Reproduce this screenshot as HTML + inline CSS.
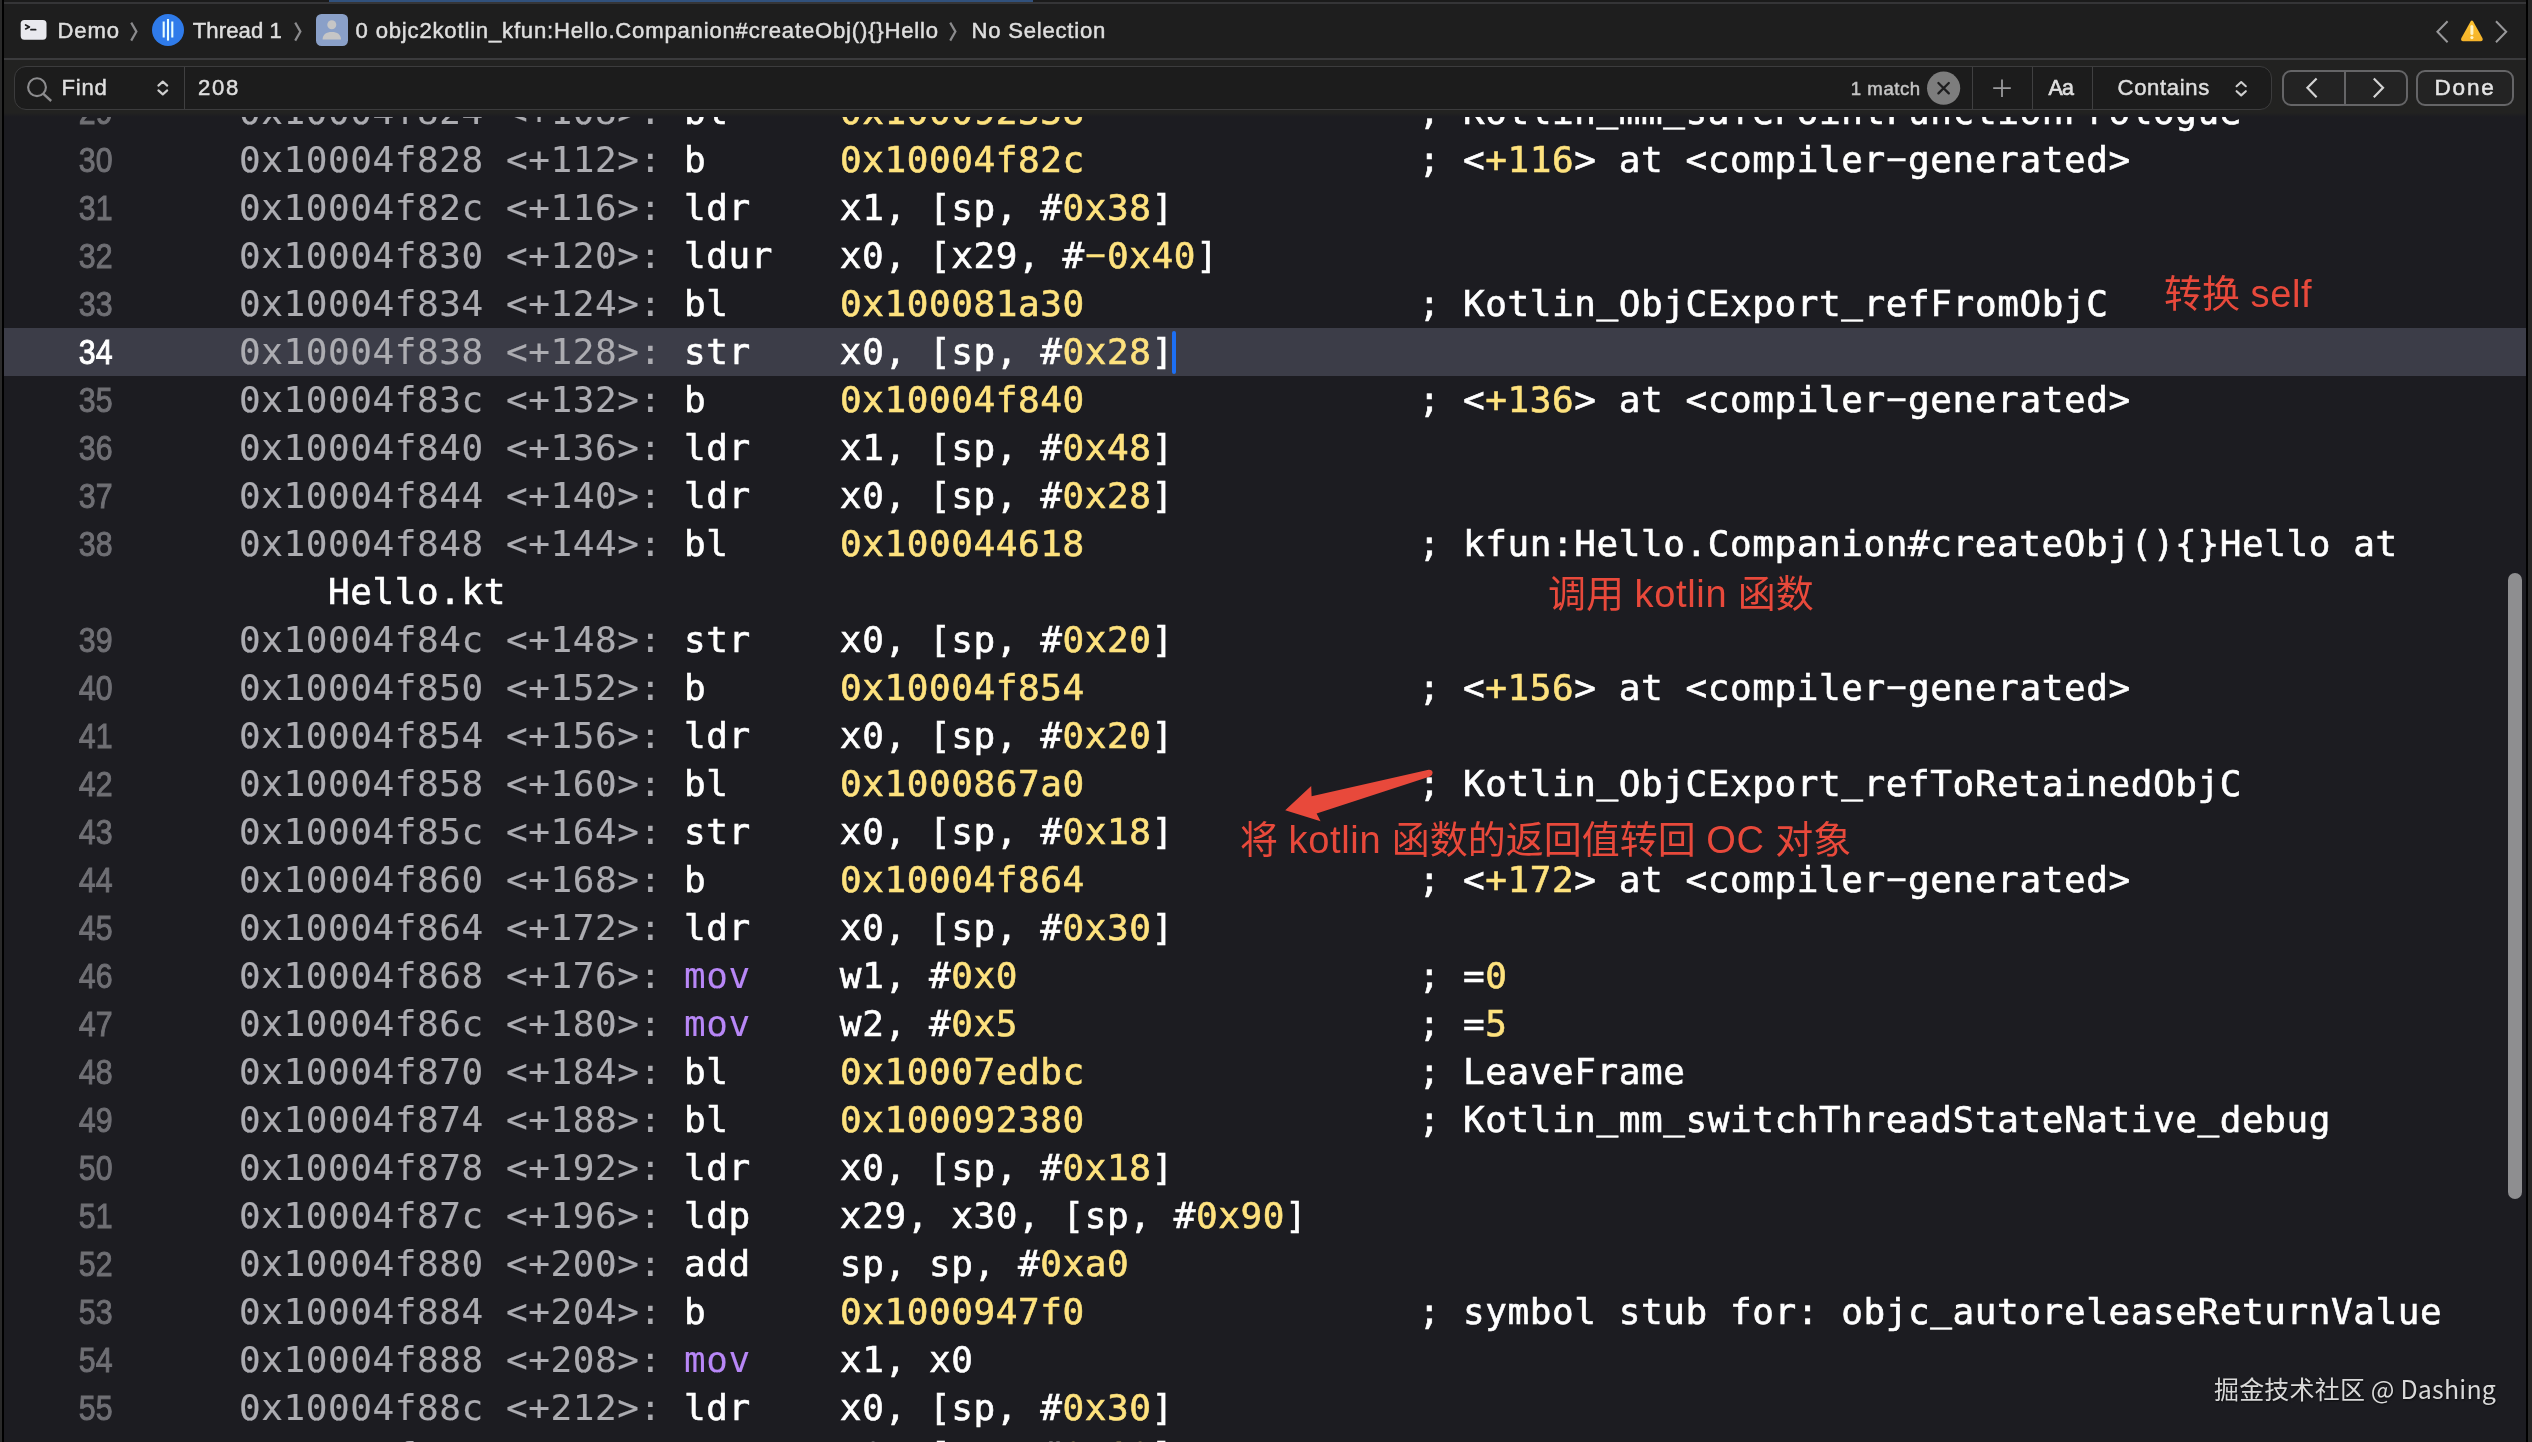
<!DOCTYPE html>
<html lang="zh">
<head>
<meta charset="utf-8">
<title>Demo — Thread 1 — objc2kotlin_kfun:Hello.Companion#createObj(){}Hello</title>
<style>
html,body{margin:0;padding:0;background:#1c1c21;}
body{width:2532px;height:1442px;overflow:hidden;position:relative;font-family:"Liberation Sans","Noto Sans CJK SC",sans-serif;}
#app{position:absolute;left:0;top:0;width:2532px;height:1442px;overflow:hidden;background:#1c1c21;}
#chrome{position:absolute;left:0;top:0;width:2532px;height:116px;will-change:transform;}
/* code area */
#code{position:absolute;left:4px;top:112px;width:2522px;height:1330px;overflow:hidden;background:#1c1c21;}
#codein{position:absolute;left:-4px;top:-112px;width:2532px;height:1442px;will-change:transform;}
.r{position:absolute;left:239px;height:48px;line-height:48px;white-space:pre;color:#fff;
   font-family:"DejaVu Sans Mono","Liberation Mono",monospace;font-size:36px;letter-spacing:0.58px;-webkit-text-stroke:0.6px currentColor;}
.r .u{position:relative;top:-3px;}
.r .h{display:inline-block;transform:translateY(-1.6px) scale(1.85,0.82);}
.r .a{color:#acacb1;-webkit-text-stroke:0.15px currentColor;}
.r .n{color:#fee27e;}
.r .k{color:#b887f7;-webkit-text-stroke:0.1px currentColor;}
.r .w{color:#fff;}
.ln{position:absolute;left:20px;width:92.5px;height:48px;line-height:48px;text-align:right;color:#6f6f74;
   font-family:"Liberation Sans",sans-serif;font-size:34.6px;-webkit-text-stroke:1px currentColor;transform:scaleX(.875);transform-origin:100% 50%;}
.ln.cur{color:#fff;}
.hl{position:absolute;left:4px;width:2522px;height:48px;background:#3c3d48;}
/* chrome */
#edgeL0{position:absolute;left:0;top:0;width:2px;height:1442px;background:#2a2a2a;}
#edgeL1{position:absolute;left:2px;top:0;width:2px;height:1442px;background:#000;}
#edgeR1{position:absolute;left:2526px;top:0;width:2px;height:1442px;background:#000;}
#edgeR0{position:absolute;left:2528px;top:0;width:4px;height:1442px;background:#272727;}
#topstrip{position:absolute;left:4px;top:0;width:2522px;height:2px;background:#1b1b1b;}
#topblue{position:absolute;left:329px;top:0;width:704px;height:2px;background:#31517c;}
#topline{position:absolute;left:4px;top:2px;width:2522px;height:2px;background:#353537;}
#jump{position:absolute;left:4px;top:4px;width:2522px;height:54px;background:#1e1e1e;}
#jumpline{position:absolute;left:4px;top:58px;width:2522px;height:2px;background:#3b3b3d;}
#findbar{position:absolute;left:4px;top:60px;width:2522px;height:57px;background:linear-gradient(#222221 0,#222221 53px,#1c1c21 57px);}
.t{position:absolute;white-space:pre;color:#dedede;-webkit-text-stroke:0.5px currentColor;font-size:22.1px;line-height:30px;height:30px;margin-top:0.5px;}
.chev{position:absolute;}
#field{position:absolute;left:14px;top:66px;width:2256px;height:42px;border:1.2px solid #3c3c3d;border-radius:12px;background:#1c1c1c;}
.vd{position:absolute;top:67px;width:1px;height:42px;background:#404041;}
.btn{position:absolute;top:70px;height:32px;border:2px solid #656567;border-radius:9px;background:#232323;}
/* annotations */
.red .la{letter-spacing:0.65px;}
.red{position:absolute;white-space:pre;color:#e8493b;font-family:"Liberation Sans","Noto Sans CJK SC",sans-serif;font-size:38px;line-height:48px;height:48px;}
#wm{position:absolute;left:2214px;top:1367.5px;letter-spacing:0.18px;white-space:pre;color:#d9d9d9;font-family:"Noto Sans CJK SC","Liberation Sans",sans-serif;font-size:25px;line-height:40px;text-shadow:1px 1px 2px rgba(0,0,0,.6);}
#thumb{position:absolute;left:2508px;top:573px;width:14px;height:626px;border-radius:7px;background:#8e8e90;}
#caret{position:absolute;left:1172px;top:330.5px;width:4px;height:43.5px;border-radius:2px;background:#1d6ff3;}
</style>
</head>
<body>
<div id="app">
 <div id="code"><div id="codein">
<div class="ln" style="top:88px">29</div>
<div class="r" style="top:88px"><span class="a">0x10004f824 &lt;+108&gt;:</span> <span class="w">bl</span>     <span class="n">0x100092338</span>               ; Kotlin<span class="u">_</span>mm<span class="u">_</span>safePointFunctionPrologue</div>
<div class="ln" style="top:136px">30</div>
<div class="r" style="top:136px"><span class="a">0x10004f828 &lt;+112&gt;:</span> <span class="w">b</span>      <span class="n">0x10004f82c</span>               ; &lt;<span class="n">+116</span>&gt; at &lt;compiler<span class="h">-</span>generated&gt;</div>
<div class="ln" style="top:184px">31</div>
<div class="r" style="top:184px"><span class="a">0x10004f82c &lt;+116&gt;:</span> <span class="w">ldr</span>    x1, [sp, #<span class="n">0x38</span>]</div>
<div class="ln" style="top:232px">32</div>
<div class="r" style="top:232px"><span class="a">0x10004f830 &lt;+120&gt;:</span> <span class="w">ldur</span>   x0, [x29, #<span class="n"><span class="h">-</span>0x40</span>]</div>
<div class="ln" style="top:280px">33</div>
<div class="r" style="top:280px"><span class="a">0x10004f834 &lt;+124&gt;:</span> <span class="w">bl</span>     <span class="n">0x100081a30</span>               ; Kotlin<span class="u">_</span>ObjCExport<span class="u">_</span>refFromObjC</div>
<div class="hl" style="top:328px"></div>
<div class="ln cur" style="top:328px">34</div>
<div class="r" style="top:328px"><span class="a">0x10004f838 &lt;+128&gt;:</span> <span class="w">str</span>    x0, [sp, #<span class="n">0x28</span>]</div>
<div class="ln" style="top:376px">35</div>
<div class="r" style="top:376px"><span class="a">0x10004f83c &lt;+132&gt;:</span> <span class="w">b</span>      <span class="n">0x10004f840</span>               ; &lt;<span class="n">+136</span>&gt; at &lt;compiler<span class="h">-</span>generated&gt;</div>
<div class="ln" style="top:424px">36</div>
<div class="r" style="top:424px"><span class="a">0x10004f840 &lt;+136&gt;:</span> <span class="w">ldr</span>    x1, [sp, #<span class="n">0x48</span>]</div>
<div class="ln" style="top:472px">37</div>
<div class="r" style="top:472px"><span class="a">0x10004f844 &lt;+140&gt;:</span> <span class="w">ldr</span>    x0, [sp, #<span class="n">0x28</span>]</div>
<div class="ln" style="top:520px">38</div>
<div class="r" style="top:520px"><span class="a">0x10004f848 &lt;+144&gt;:</span> <span class="w">bl</span>     <span class="n">0x100044618</span>               ; kfun:Hello.Companion#createObj(){}Hello at</div>
<div class="r" style="top:568px">    Hello.kt</div>
<div class="ln" style="top:616px">39</div>
<div class="r" style="top:616px"><span class="a">0x10004f84c &lt;+148&gt;:</span> <span class="w">str</span>    x0, [sp, #<span class="n">0x20</span>]</div>
<div class="ln" style="top:664px">40</div>
<div class="r" style="top:664px"><span class="a">0x10004f850 &lt;+152&gt;:</span> <span class="w">b</span>      <span class="n">0x10004f854</span>               ; &lt;<span class="n">+156</span>&gt; at &lt;compiler<span class="h">-</span>generated&gt;</div>
<div class="ln" style="top:712px">41</div>
<div class="r" style="top:712px"><span class="a">0x10004f854 &lt;+156&gt;:</span> <span class="w">ldr</span>    x0, [sp, #<span class="n">0x20</span>]</div>
<div class="ln" style="top:760px">42</div>
<div class="r" style="top:760px"><span class="a">0x10004f858 &lt;+160&gt;:</span> <span class="w">bl</span>     <span class="n">0x1000867a0</span>               ; Kotlin<span class="u">_</span>ObjCExport<span class="u">_</span>refToRetainedObjC</div>
<div class="ln" style="top:808px">43</div>
<div class="r" style="top:808px"><span class="a">0x10004f85c &lt;+164&gt;:</span> <span class="w">str</span>    x0, [sp, #<span class="n">0x18</span>]</div>
<div class="ln" style="top:856px">44</div>
<div class="r" style="top:856px"><span class="a">0x10004f860 &lt;+168&gt;:</span> <span class="w">b</span>      <span class="n">0x10004f864</span>               ; &lt;<span class="n">+172</span>&gt; at &lt;compiler<span class="h">-</span>generated&gt;</div>
<div class="ln" style="top:904px">45</div>
<div class="r" style="top:904px"><span class="a">0x10004f864 &lt;+172&gt;:</span> <span class="w">ldr</span>    x0, [sp, #<span class="n">0x30</span>]</div>
<div class="ln" style="top:952px">46</div>
<div class="r" style="top:952px"><span class="a">0x10004f868 &lt;+176&gt;:</span> <span class="k">mov</span>    w1, #<span class="n">0x0</span>                  ; =<span class="n">0</span></div>
<div class="ln" style="top:1000px">47</div>
<div class="r" style="top:1000px"><span class="a">0x10004f86c &lt;+180&gt;:</span> <span class="k">mov</span>    w2, #<span class="n">0x5</span>                  ; =<span class="n">5</span></div>
<div class="ln" style="top:1048px">48</div>
<div class="r" style="top:1048px"><span class="a">0x10004f870 &lt;+184&gt;:</span> <span class="w">bl</span>     <span class="n">0x10007edbc</span>               ; LeaveFrame</div>
<div class="ln" style="top:1096px">49</div>
<div class="r" style="top:1096px"><span class="a">0x10004f874 &lt;+188&gt;:</span> <span class="w">bl</span>     <span class="n">0x100092380</span>               ; Kotlin<span class="u">_</span>mm<span class="u">_</span>switchThreadStateNative<span class="u">_</span>debug</div>
<div class="ln" style="top:1144px">50</div>
<div class="r" style="top:1144px"><span class="a">0x10004f878 &lt;+192&gt;:</span> <span class="w">ldr</span>    x0, [sp, #<span class="n">0x18</span>]</div>
<div class="ln" style="top:1192px">51</div>
<div class="r" style="top:1192px"><span class="a">0x10004f87c &lt;+196&gt;:</span> <span class="w">ldp</span>    x29, x30, [sp, #<span class="n">0x90</span>]</div>
<div class="ln" style="top:1240px">52</div>
<div class="r" style="top:1240px"><span class="a">0x10004f880 &lt;+200&gt;:</span> <span class="w">add</span>    sp, sp, #<span class="n">0xa0</span></div>
<div class="ln" style="top:1288px">53</div>
<div class="r" style="top:1288px"><span class="a">0x10004f884 &lt;+204&gt;:</span> <span class="w">b</span>      <span class="n">0x1000947f0</span>               ; symbol stub for: objc<span class="u">_</span>autoreleaseReturnValue</div>
<div class="ln" style="top:1336px">54</div>
<div class="r" style="top:1336px"><span class="a">0x10004f888 &lt;+208&gt;:</span> <span class="k">mov</span>    x1, x0</div>
<div class="ln" style="top:1384px">55</div>
<div class="r" style="top:1384px"><span class="a">0x10004f88c &lt;+212&gt;:</span> <span class="w">ldr</span>    x0, [sp, #<span class="n">0x30</span>]</div>
<div class="ln" style="top:1432px">56</div>
<div class="r" style="top:1432px"><span class="a">0x10004f890 &lt;+216&gt;:</span> <span class="w">str</span>    x0, [sp, #<span class="n">0x10</span>]</div>
  <div id="caret"></div>
  <div class="red" style="left:2164px;top:270px;">转换 <span class="la">self</span></div>
  <div class="red" style="left:1548px;top:570px;">调用 <span class="la">kotlin</span> 函数</div>
  <div class="red" style="left:1240px;top:816px;">将 <span class="la">kotlin</span> 函数的返回值转回 <span class="la">OC</span> 对象</div>
  <svg style="position:absolute;left:1270px;top:760px" width="180" height="80" viewBox="1270 760 180 80">
   <path d="M1285.2 810.3 L1311.2 786 L1311.6 796.2 L1428.6 769.8 Q1432.5 769.6 1432.6 772.8 Q1432.6 775.6 1430 776.4 L1316.6 813.4 L1320.6 821.3 Z" fill="#e8493b"/>
  </svg>
  <div id="wm">掘金技术社区 @ Dashing</div>
  <div id="thumb"></div>
 </div></div>

 <div id="chrome">
 <div id="topstrip"></div><div id="topblue"></div><div id="topline"></div>
 <div id="jump"></div><div id="jumpline"></div>
 <div id="findbar"></div>

 <!-- jump bar -->
 <svg class="chev" style="left:20px;top:19px" width="28" height="22" viewBox="0 0 28 22">
  <rect x="0.7" y="0.9" width="25.8" height="19.8" rx="3.6" fill="#e9e9ee"/>
  <path d="M5.6 5.9 L9.4 7.9 L5.6 9.9" fill="none" stroke="#1d1d1f" stroke-width="1.7" stroke-linecap="round" stroke-linejoin="round"/>
  <path d="M11 10.7 H15.6" stroke="#1d1d1f" stroke-width="1.8" stroke-linecap="round"/>
 </svg>
 <div class="t" id="tDemo" style="letter-spacing:0.90px;left:57.4px;top:15.5px;">Demo</div>
 <svg class="chev" style="left:128px;top:20px" width="12" height="24" viewBox="0 0 12 24"><path d="M3.2 2.6 L8.4 11.6 L3.2 20.6" fill="none" stroke="#8b8b8d" stroke-width="2.2" stroke-linejoin="miter"/></svg>
 <svg class="chev" style="left:150px;top:12px" width="36" height="36" viewBox="0 0 36 36">
  <circle cx="18" cy="18" r="16" fill="#2f7bea"/>
  <path d="M13.7 9.4 V25.4 M22.3 9.4 V25.4" stroke="#e9ffff" stroke-width="2.1" stroke-linecap="butt"/>
  <path d="M18 7 V28.6" stroke="#e9ffff" stroke-width="2.1"/>
 </svg>
 <div class="t" id="tThread" style="letter-spacing:0.11px;left:192.7px;top:15.5px;">Thread 1</div>
 <svg class="chev" style="left:292px;top:20px" width="12" height="24" viewBox="0 0 12 24"><path d="M3.2 2.6 L8.4 11.6 L3.2 20.6" fill="none" stroke="#8b8b8d" stroke-width="2.2"/></svg>
 <svg class="chev" style="left:314px;top:12px" width="36" height="36" viewBox="0 0 36 36">
  <rect x="2" y="2" width="32" height="32" rx="5.5" fill="#8aa0c8"/>
  <circle cx="17.8" cy="12.7" r="4.5" fill="#c6c6c6"/>
  <path d="M8.6 27.6 C8.6 22.4 12.4 20 17.8 20 C23.2 20 27 22.4 27 27.6 Z" fill="#c6c6c6"/>
 </svg>
 <div class="t" id="tFunc" style="letter-spacing:0.81px;left:355.6px;top:15.5px;">0 objc2kotlin_kfun:Hello.Companion#createObj(){}Hello</div>
 <svg class="chev" style="left:947px;top:20px" width="12" height="24" viewBox="0 0 12 24"><path d="M3.2 2.6 L8.4 11.6 L3.2 20.6" fill="none" stroke="#8b8b8d" stroke-width="2.2"/></svg>
 <div class="t" id="tNoSel" style="letter-spacing:0.77px;left:971.5px;top:15.5px;">No Selection</div>

 <svg class="chev" style="left:2430px;top:16px" width="84" height="32" viewBox="2430 16 84 32">
  <path d="M2447.6 21.2 L2437.4 31.7 L2447.6 42.2" fill="none" stroke="#98989a" stroke-width="2"/>
  <path d="M2496 21.2 L2506.2 31.7 L2496 42.2" fill="none" stroke="#98989a" stroke-width="2"/>
  <defs><linearGradient id="wg" x1="0" y1="0" x2="0" y2="1"><stop offset="0" stop-color="#fdc22f"/><stop offset="1" stop-color="#f5b32a"/></linearGradient></defs>
  <path d="M2470.6 21.6 Q2471.9 19.6 2473.2 21.6 L2482.4 38.0 Q2483.6 41.0 2480.6 41.2 L2463.2 41.2 Q2460.2 41.0 2461.4 38.0 Z" fill="url(#wg)"/>
  <path d="M2471.9 26.6 V33.6" stroke="#fff3c4" stroke-width="3" stroke-linecap="round"/>
  <circle cx="2471.9" cy="37.6" r="1.6" fill="#fff3c4"/>
 </svg>

 <!-- find bar -->
 <div id="field"></div>
 <svg class="chev" style="left:24px;top:72px" width="32" height="32" viewBox="24 72 32 32">
  <circle cx="37" cy="87.2" r="8.9" fill="none" stroke="#8c8c8e" stroke-width="2.1"/>
  <path d="M43.4 93.8 L51.2 101" stroke="#8c8c8e" stroke-width="2.4" stroke-linecap="butt"/>
 </svg>
 <div class="t" id="tFind" style="letter-spacing:0.77px;left:61.5px;top:72.5px;">Find</div>
 <svg class="chev" style="left:154px;top:78px" width="18" height="22" viewBox="154 78 18 22">
  <path d="M158.4 85.6 L162.8 81.6 L167.2 85.6 M158.4 90.4 L162.8 94.4 L167.2 90.4" fill="none" stroke="#cfcfcf" stroke-width="2.1" stroke-linecap="round" stroke-linejoin="round"/>
 </svg>
 <div class="vd" style="left:184.4px"></div>
 <div class="t" id="t208" style="letter-spacing:1.75px;left:198.0px;top:72.5px;">208</div>

 <div class="t" id="tMatch" style="letter-spacing:0.53px;left:1850.8px;top:73.5px;font-size:18.6px;color:#c4c4c4;">1 match</div>
 <svg class="chev" style="left:1925px;top:70px" width="38" height="38" viewBox="1925 70 38 38">
  <circle cx="1943.6" cy="88.2" r="16.6" fill="#7d7d7d"/>
  <path d="M1938.4 83 L1948.8 93.4 M1948.8 83 L1938.4 93.4" stroke="#1e1e1f" stroke-width="2.3" stroke-linecap="round"/>
 </svg>
 <div class="vd" style="left:1972px"></div>
 <svg class="chev" style="left:1990px;top:76px" width="24" height="24" viewBox="1990 76 24 24">
  <path d="M1993.2 88.2 H2010.8 M2002 79.4 V97" stroke="#9b9b9d" stroke-width="1.8"/>
 </svg>
 <div class="vd" style="left:2031.6px"></div>
 <div class="t" id="tAa" style="letter-spacing:-0.9px;font-size:21.4px;-webkit-text-stroke:0.7px currentColor;left:2048.6px;top:72.5px;">Aa</div>
 <div class="vd" style="left:2092px"></div>
 <div class="t" id="tContains" style="letter-spacing:0.63px;left:2117.6px;top:72.5px;">Contains</div>
 <svg class="chev" style="left:2232px;top:78px" width="18" height="22" viewBox="2232 78 18 22">
  <path d="M2236.6 86.2 L2241.2 82 L2245.8 86.2 M2236.6 91.2 L2241.2 95.4 L2245.8 91.2" fill="none" stroke="#cfcfcf" stroke-width="2.1" stroke-linecap="round" stroke-linejoin="round"/>
 </svg>

 <div class="btn" style="left:2282px;width:122px;"></div>
 <div style="position:absolute;left:2344px;top:71px;width:2px;height:34px;background:#656567;"></div>
 <svg class="chev" style="left:2300px;top:74px" width="90" height="28" viewBox="2300 74 90 28">
  <path d="M2316.6 78.4 L2307.4 87.8 L2316.6 97.2" fill="none" stroke="#d4d4d4" stroke-width="2.2"/>
  <path d="M2373.8 78.4 L2383 87.8 L2373.8 97.2" fill="none" stroke="#d4d4d4" stroke-width="2.2"/>
 </svg>
 <div class="btn" style="left:2416px;width:94px;"></div>
 <div class="t" id="tDone" style="letter-spacing:1.77px;left:2434.5px;top:72px;color:#e4e4e4;font-size:22.6px;">Done</div>

 </div>
 <div id="edgeL0"></div><div id="edgeL1"></div><div id="edgeR1"></div><div id="edgeR0"></div>
</div>
</body>
</html>
